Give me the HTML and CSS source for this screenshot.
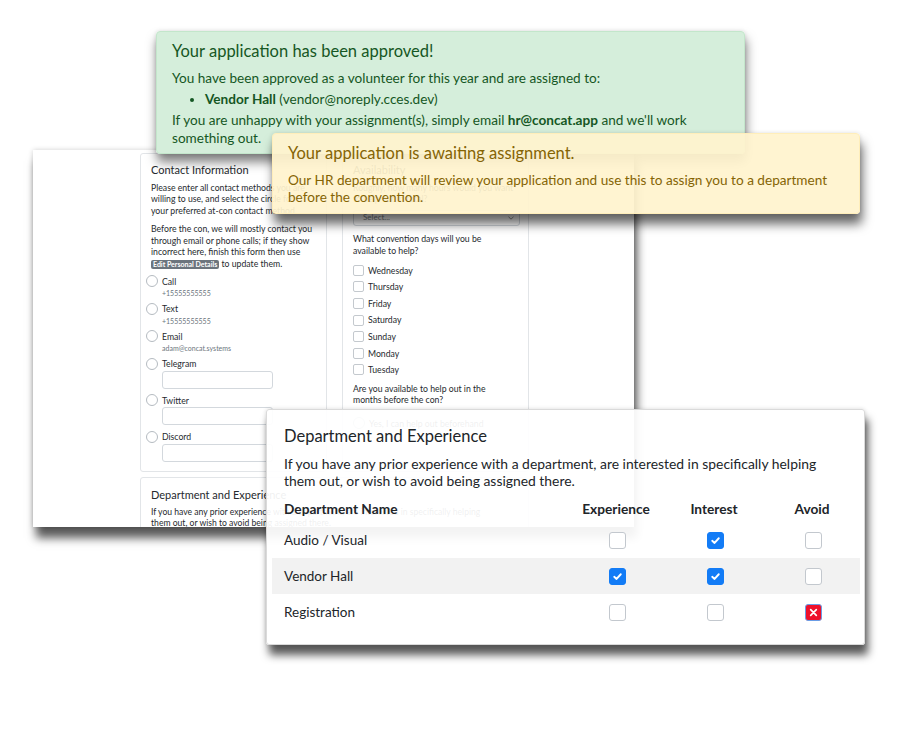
FILE: index.html
```html
<!DOCTYPE html>
<html lang="en">
<head>
<meta charset="utf-8">
<title>Volunteer application</title>
<link rel="stylesheet" href="styles.css">
</head>
<body>
<div class="canvas">

  <section class="shot form-shot">
    <div class="form-grid">
      <div class="fcard contact">
        <h3 class="fcard-title">Contact Information</h3>
        <p>Please enter all contact methods you are<br>willing to use, and select the circle for<br>your preferred at-con contact method.</p>
        <p class="p2">Before the con, we will mostly contact you<br>through email or phone calls; if they show<br>incorrect here, finish this form then use<br><span class="badge">Edit Personal Details</span> to update them.</p>
        <div class="radio-list">
          <div class="radio-item"><span class="radio"></span><div><div class="rlabel">Call</div><div class="rsub">+15555555555</div></div></div>
          <div class="radio-item"><span class="radio"></span><div><div class="rlabel">Text</div><div class="rsub">+15555555555</div></div></div>
          <div class="radio-item"><span class="radio"></span><div><div class="rlabel">Email</div><div class="rsub">adam@concat.systems</div></div></div>
          <div class="radio-item"><span class="radio"></span><div><div class="rlabel">Telegram</div><div class="rinput"></div></div></div>
          <div class="radio-item"><span class="radio"></span><div><div class="rlabel">Twitter</div><div class="rinput"></div></div></div>
          <div class="radio-item"><span class="radio"></span><div><div class="rlabel">Discord</div><div class="rinput"></div></div></div>
        </div>
      </div>

      <div class="fcard avail">
        <h3 class="fcard-title">Availability</h3>
        <p>Roughly, how many hours would you want<br>to help out in total?</p>
        <div class="fselect"><span>Select...</span>
          <svg width="6" height="4" viewBox="0 0 6 4"><path d="M0.5 0.8 L3 3.2 L5.5 0.8" fill="none" stroke="#888" stroke-width="0.9"/></svg>
        </div>
        <p class="p-days">What convention days will you be<br>available to help?</p>
        <div class="check-list">
          <div class="check-item"><span class="sbox"></span>Wednesday</div>
          <div class="check-item"><span class="sbox"></span>Thursday</div>
          <div class="check-item"><span class="sbox"></span>Friday</div>
          <div class="check-item"><span class="sbox"></span>Saturday</div>
          <div class="check-item"><span class="sbox"></span>Sunday</div>
          <div class="check-item"><span class="sbox"></span>Monday</div>
          <div class="check-item"><span class="sbox"></span>Tuesday</div>
        </div>
        <p class="p-before">Are you available to help out in the<br>months before the con?</p>
        <div class="radio-item solo"><span class="radio"></span><div class="rlabel">Yes, I can help out beforehand</div></div>
      </div>

      <div class="fcard dept-form">
        <h3 class="fcard-title">Department and Experience</h3>
        <p>If you have any prior experience with a department, are interested in specifically helping<br>them out, or wish to avoid being assigned there.</p>
      </div>
    </div>
  </section>

  <section class="alert alert-success">
    <h4 class="alert-title">Your application has been approved!</h4>
    <p>You have been approved as a volunteer for this year and are assigned to:</p>
    <ul>
      <li><strong>Vendor Hall</strong> (vendor@noreply.cces.dev)</li>
    </ul>
    <p>If you are unhappy with your assignment(s), simply email <strong>hr@concat.app</strong> and we'll work something out.</p>
  </section>

  <section class="alert alert-warning">
    <h4 class="alert-title">Your application is awaiting assignment.</h4>
    <p>Our HR department will review your application and use this to assign you to a department before the convention.</p>
  </section>

  <section class="shot dept-card">
    <h3 class="dept-title">Department and Experience</h3>
    <p class="dept-desc">If you have any prior experience with a department, are interested in specifically helping them out, or wish to avoid being assigned there.</p>
    <table class="dept-table">
      <colgroup><col class="c-name"><col><col><col></colgroup>
      <thead>
        <tr><th class="name">Department Name</th><th>Experience</th><th>Interest</th><th>Avoid</th></tr>
      </thead>
      <tbody>
        <tr>
          <td class="name">Audio / Visual</td>
          <td><span class="cb"></span></td>
          <td><span class="cb on"><svg viewBox="0 0 16 16"><path d="M4.5 8.3 L7 10.6 L11.5 5.6" fill="none" stroke="#fff" stroke-width="2" stroke-linecap="round" stroke-linejoin="round"/></svg></span></td>
          <td><span class="cb"></span></td>
        </tr>
        <tr class="striped">
          <td class="name">Vendor Hall</td>
          <td><span class="cb on"><svg viewBox="0 0 16 16"><path d="M4.5 8.3 L7 10.6 L11.5 5.6" fill="none" stroke="#fff" stroke-width="2" stroke-linecap="round" stroke-linejoin="round"/></svg></span></td>
          <td><span class="cb on"><svg viewBox="0 0 16 16"><path d="M4.5 8.3 L7 10.6 L11.5 5.6" fill="none" stroke="#fff" stroke-width="2" stroke-linecap="round" stroke-linejoin="round"/></svg></span></td>
          <td><span class="cb"></span></td>
        </tr>
        <tr>
          <td class="name">Registration</td>
          <td><span class="cb"></span></td>
          <td><span class="cb"></span></td>
          <td><span class="cb x"><svg viewBox="0 0 16 16"><path d="M5 5 L11 11 M11 5 L5 11" fill="none" stroke="#fff" stroke-width="1.8" stroke-linecap="round"/></svg></span></td>
        </tr>
      </tbody>
    </table>
  </section>

</div>
</body>
</html>
```

FILE: styles.css
```css
html, body {
  margin: 0;
  padding: 0;
}

body {
  width: 900px;
  height: 730px;
  background: #ffffff;
  font-family: Lato, "Noto Sans", "Liberation Sans", sans-serif;
  overflow: hidden;
}

.canvas {
  position: relative;
  width: 900px;
  height: 730px;
}

/* ---------- background form screenshot ---------- */
.form-shot {
  position: absolute;
  left: 33px;
  top: 150px;
  width: 601px;
  height: 377px;
  background: #ffffff;
  overflow: hidden;
  box-shadow: 3px 11px 9px rgba(0, 0, 0, 0.65), 0 0 5px rgba(0, 0, 0, 0.18);
}

.form-grid {
  display: grid;
  grid-template-columns: 187px 187px;
  grid-template-rows: 319px auto;
  column-gap: 15px;
  row-gap: 5px;
  padding: 3px 0 0 107px;
}

.fcard {
  box-sizing: border-box;
  border: 1px solid #e2e5e8;
  border-radius: 3px;
  padding: 9px 10px;
  color: #262a2e;
  font-size: 8.7px;
  line-height: 11.5px;
  white-space: nowrap;
}

.fcard p {
  margin: 0;
}

.fcard-title {
  font-size: 11px;
  line-height: 14px;
  font-weight: 400;
  margin: 0 0 4.5px;
  color: #262a2e;
}

.contact .p2 {
  margin-top: 7px;
}

.badge {
  display: inline-block;
  background: #6c757d;
  color: #ffffff;
  font-size: 7px;
  line-height: 9px;
  padding: 0 2px;
  border-radius: 2px;
  font-weight: 700;
}

.radio-list {
  margin-top: 5.5px;
  display: flex;
  flex-direction: column;
  gap: 3px;
}

.radio-item {
  display: flex;
  gap: 4px;
  margin-left: -5px;
}

.radio {
  flex: none;
  box-sizing: border-box;
  width: 12px;
  height: 12px;
  border: 1px solid #b5bbc1;
  border-radius: 50%;
  background: #fff;
  margin-top: 0.5px;
}

.rlabel {
  font-size: 8.7px;
  line-height: 13px;
}

.rsub {
  font-size: 7px;
  line-height: 11px;
  margin-top: 0.5px;
  color: #6c757d;
}

.rinput {
  box-sizing: border-box;
  width: 111px;
  height: 18px;
  border: 1px solid #d3d8dd;
  border-radius: 3px;
  margin: 0.5px 0 2px;
}

.fselect {
  box-sizing: border-box;
  display: flex;
  align-items: center;
  justify-content: space-between;
  width: 167px;
  height: 16px;
  margin-top: 5.5px;
  padding: 0 5px 0 9px;
  border: 1px solid #d3d8dd;
  border-radius: 3px;
  color: #7b8288;
  font-size: 8px;
}

.avail .p-days {
  margin-top: 7px;
}

.check-list {
  margin-top: 6px;
}

.check-item {
  display: flex;
  align-items: center;
  gap: 4px;
  height: 16.6px;
}

.sbox {
  box-sizing: border-box;
  width: 11px;
  height: 11px;
  border: 1px solid #c4c9ce;
  border-radius: 2px;
  background: #fff;
}

.avail .p-before {
  margin-top: 4.5px;
}

.solo {
  margin-top: 11px;
  margin-left: 0;
}

.dept-form {
  grid-column: 1 / -1;
  height: 120px;
  padding-top: 10px;
}

.dept-form .fcard-title {
  margin-bottom: 5px;
}

.dept-form p {
  font-size: 8.6px;
  line-height: 10.5px;
}

/* ---------- alerts ---------- */
.alert {
  position: absolute;
  box-sizing: border-box;
  border: 1px solid;
  border-radius: 4px;
  padding: 9px 15px 8px;
}

.alert-title {
  font-size: 16.5px;
  line-height: 20px;
  font-weight: 400;
  margin: 0 0 8px;
}

.alert p {
  font-size: 13.6px;
  line-height: 18px;
  margin: 0;
}

.alert ul {
  margin: 3px 0;
  padding-left: 33px;
  font-size: 13.6px;
  line-height: 18px;
}

.alert strong {
  font-weight: 700;
}

.alert-success {
  left: 156px;
  top: 31px;
  width: 589px;
  height: 123px;
  background: rgba(212, 237, 218, 0.97);
  border-color: #c3e6cb;
  color: #155724;
  box-shadow: 1px 8px 11px rgba(0, 0, 0, 0.5), 0 0 4px rgba(0, 0, 0, 0.12);
}

.alert-warning {
  left: 272px;
  top: 133px;
  width: 588px;
  height: 81px;
  padding-top: 9px;
  background: rgba(255, 243, 205, 0.93);
  border-color: #ffeeba;
  color: #856404;
  box-shadow: 2px 10px 11px rgba(0, 0, 0, 0.6), 0 0 4px rgba(0, 0, 0, 0.12);
}

.alert-warning .alert-title {
  margin-bottom: 8.5px;
}

.alert-warning p {
  line-height: 17px;
}

/* ---------- department card ---------- */
.dept-card {
  position: absolute;
  left: 266px;
  top: 409px;
  width: 599px;
  height: 236px;
  box-sizing: border-box;
  border: 1px solid #dadada;
  border-radius: 3px;
  background: rgba(255, 255, 255, 0.93);
  padding: 16px 5px 0;
  color: #212529;
  box-shadow: 3px 10px 9px rgba(0, 0, 0, 0.65), 0 0 4px rgba(0, 0, 0, 0.15);
}

.dept-title {
  font-size: 16.5px;
  line-height: 20px;
  font-weight: 400;
  margin: 0 0 8.5px;
  padding-left: 12px;
}

.dept-desc {
  font-size: 13.9px;
  line-height: 17px;
  margin: 0;
  padding: 0 12px;
}

.dept-table {
  width: 588px;
  margin-top: 5.5px;
  border-collapse: collapse;
  table-layout: fixed;
}

.c-name {
  width: 294px;
}

.dept-table th {
  height: 28px;
  padding: 0 0 0 2px;
  font-size: 13.7px;
  font-weight: 700;
  text-align: center;
}

.dept-table td {
  height: 36px;
  padding: 0 0 0 4px;
  font-size: 13.5px;
  text-align: center;
}

.dept-table .name {
  text-align: left;
  padding-left: 12px;
}

.dept-table .striped td {
  background: #f2f2f2;
}

.cb {
  display: inline-block;
  box-sizing: border-box;
  width: 17px;
  height: 17px;
  border: 1px solid #c3c8ce;
  border-radius: 3px;
  background: #ffffff;
  vertical-align: middle;
}

.cb svg {
  display: block;
  width: 15px;
  height: 15px;
}

.cb.on {
  background: #137cf6;
  border-color: #137cf6;
}

.cb.x {
  background: #ee102b;
  border-color: #6a9de6;
}
```
